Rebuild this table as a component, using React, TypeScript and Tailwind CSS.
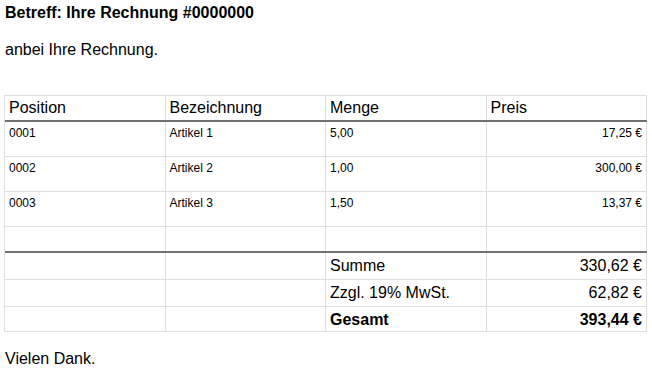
import React from "react";

const items = [
  { pos: "0001", name: "Artikel 1", qty: "5,00", price: "17,25 €" },
  { pos: "0002", name: "Artikel 2", qty: "1,00", price: "300,00 €" },
  { pos: "0003", name: "Artikel 3", qty: "1,50", price: "13,37 €" },
];

const totals = [
  { label: "Summe", value: "330,62 €", bold: false, h: "h-[27px]" },
  { label: "Zzgl. 19% MwSt.", value: "62,82 €", bold: false, h: "h-[27px]" },
  { label: "Gesamt", value: "393,44 €", bold: true, h: "h-[25px]" },
];

const cell = "border-r border-[#dedede] px-[4px]";

export default function App() {
  return (
    <div
      className="min-h-screen bg-white text-black px-[4px] pt-[4px]"
      style={{ fontFamily: '"Liberation Sans", Arial, sans-serif' }}
    >
      <h1 className="pl-[1px] text-[16px] leading-[18px] font-bold">Betreff: Ihre Rechnung #0000000</h1>
      <p className="pl-[1px] mt-[19px] text-[16px] leading-[18px]">anbei Ihre Rechnung.</p>

      {/* ── Table ─────────────────────────────────────── */}
      <div className="mt-[36px] w-[643px] border-t border-l border-[#dedede]">
        <div className="grid grid-cols-4 h-[26px] border-b-2 border-[#707070] text-[16px] leading-[18px]">
          <div className={`${cell} pt-[3px]`}>Position</div>
          <div className={`${cell} pt-[3px]`}>Bezeichnung</div>
          <div className={`${cell} pt-[3px]`}>Menge</div>
          <div className={`${cell} pt-[3px]`}>Preis</div>
        </div>

        {items.map(it => (
          <div key={it.pos} className="grid grid-cols-4 h-[35px] border-b border-[#dedede] text-[12px] leading-[14px]">
            <div className={`${cell} pt-[4px]`}>{it.pos}</div>
            <div className={`${cell} pt-[4px]`}>{it.name}</div>
            <div className={`${cell} pt-[4px]`}>{it.qty}</div>
            <div className={`${cell} pt-[4px] text-right`}>{it.price}</div>
          </div>
        ))}

        <div className="grid grid-cols-4 h-[26px] border-b-2 border-[#707070]">
          <div className={cell} />
          <div className={cell} />
          <div className={cell} />
          <div className={cell} />
        </div>

        {totals.map(t => (
          <div key={t.label} className={`grid grid-cols-4 ${t.h} border-b border-[#dedede] text-[16px] leading-[18px] ${t.bold ? "font-bold" : ""}`}>
            <div className={cell} />
            <div className={cell} />
            <div className={`${cell} pt-[4px]`}>{t.label}</div>
            <div className={`${cell} pt-[4px] text-right`}>{t.value}</div>
          </div>
        ))}
      </div>

      <p className="pl-[1px] mt-[18px] text-[16px] leading-[18px]">Vielen Dank.</p>
    </div>
  );
}
